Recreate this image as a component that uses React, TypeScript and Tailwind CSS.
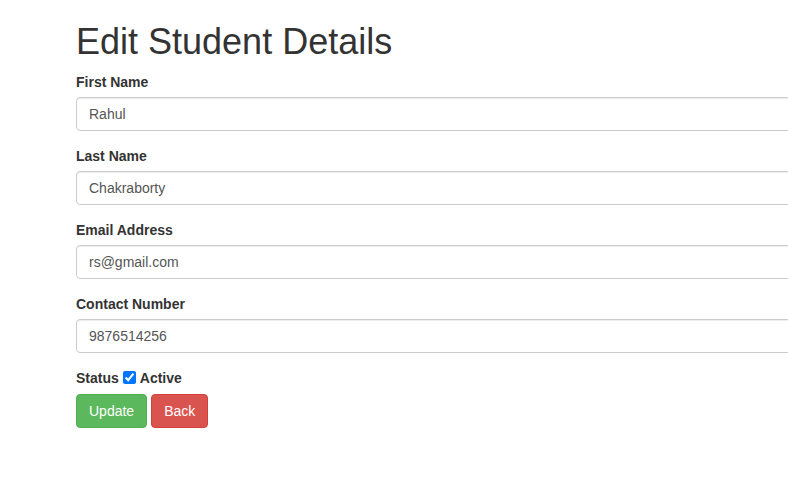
import React from "react";

const fields = [
  { label: "First Name", value: "Rahul" },
  { label: "Last Name", value: "Chakraborty" },
  { label: "Email Address", value: "rs@gmail.com" },
  { label: "Contact Number", value: "9876514256" },
];

export default function App() {
  return (
    <div
      className="w-full h-[486px] overflow-hidden bg-white text-[14px] leading-[20px] text-[#333]"
      style={{ fontFamily: '"Liberation Sans", Arial, Helvetica, sans-serif' }}
    >
      <div className="pl-[76px] pt-[22px] w-[900px]">
        <h1 className="text-[36px] leading-[39.6px] font-normal text-[#333] mb-[10px]">
          Edit Student Details
        </h1>
        {fields.map((f) => (
          <div key={f.label} className="mb-[15px]">
            <label className="block font-bold mb-[5px]">{f.label}</label>
            <input
              type="text"
              defaultValue={f.value}
              className="block w-[760px] h-[34px] px-[12px] py-[6px] text-[14px] text-[#555] bg-white border border-[#ccc] rounded-[4px] shadow-[inset_0_1px_1px_rgba(0,0,0,0.075)] outline-none"
            />
          </div>
        ))}
        <div className="flex items-center font-bold h-[20px]">
          <span>Status</span>
          <input
            type="checkbox"
            defaultChecked
            className="w-[13px] h-[13px] ml-[4px] mr-[4px] accent-[#0075ff]"
          />
          <span>Active</span>
        </div>
        <div className="flex gap-[4px] mt-[6px]">
          <button className="h-[34px] px-[12px] text-[14px] text-white bg-[#5cb85c] border border-[#4cae4c] rounded-[4px]">
            Update
          </button>
          <button className="h-[34px] px-[12px] text-[14px] text-white bg-[#d9534f] border border-[#d43f3a] rounded-[4px]">
            Back
          </button>
        </div>
      </div>
    </div>
  );
}
